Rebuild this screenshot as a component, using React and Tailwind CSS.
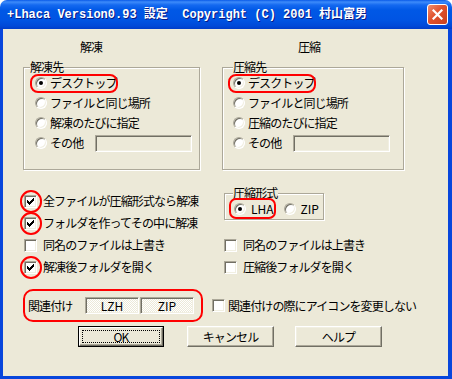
import React from "react";

const sunken =
  "border border-t-[#ACA899] border-l-[#ACA899] border-b-white border-r-white shadow-[inset_1px_1px_0_#716F64,inset_-1px_-1px_0_#F1EFE2]";

const Radio = ({ checked }) => (
  <span className={`relative inline-block w-[12px] h-[12px] shrink-0 rounded-full bg-white ${sunken}`}>
    {checked && <span className="absolute left-[3px] top-[3px] w-[4px] h-[4px] rounded-full bg-black" />}
  </span>
);

const Check = () => (
  <svg width="7" height="7" viewBox="0 0 7 7" shapeRendering="crispEdges" className="absolute left-[2px] top-[2px]">
    <rect x="0" y="2" width="1" height="3" fill="#000" />
    <rect x="1" y="3" width="1" height="3" fill="#000" />
    <rect x="2" y="4" width="1" height="3" fill="#000" />
    <rect x="3" y="3" width="1" height="3" fill="#000" />
    <rect x="4" y="2" width="1" height="3" fill="#000" />
    <rect x="5" y="1" width="1" height="3" fill="#000" />
    <rect x="6" y="0" width="1" height="3" fill="#000" />
  </svg>
);

const Checkbox = ({ checked, marked }) => (
  <span className={`relative inline-block w-[13px] h-[13px] shrink-0 bg-white ${sunken}`}>
    {checked && <Check />}
    {marked && (
      <span className="absolute left-[-5px] top-[-6px] w-[22px] h-[23px] rounded-full border-2 border-[#FF0000]" />
    )}
  </span>
);

const RadioRow = ({ checked, marked, children, extra }) => (
  <div className="relative flex items-center h-[20px]">
    {marked && (
      <span className="absolute left-[-5px] top-[1px] w-[88px] h-[19px] rounded-[8px] border-2 border-[#FF0000]" />
    )}
    <Radio checked={checked} />
    <span className={extra ? "ml-[3px] w-[45px]" : "ml-[3px]"}>{children}</span>
    {extra && <span className={`w-[97px] h-[17px] bg-[#ECE9D8] ${sunken}`} />}
  </div>
);

const CheckRow = ({ checked, marked, children }) => (
  <div className="flex items-center h-[22px]">
    <Checkbox checked={checked} marked={marked} />
    <span className="ml-[6px]">{children}</span>
  </div>
);

const Group = ({ title, legendLeft, width, pad, children }) => (
  <div
    className={`relative h-[103px] border border-[#ACA899] shadow-[1px_1px_0_#fff,inset_1px_1px_0_#fff] pt-[5px] ${width} ${pad}`}
  >
    <span className={`absolute top-[-8px] h-[14px] leading-[14px] bg-[#ECE9D8] pr-[1px] ${legendLeft}`}>{title}</span>
    {children}
  </div>
);

const Button = ({ children, isDefault }) =>
  isDefault ? (
    <div className="w-[86px] h-[21px] border border-black">
      <div className="relative h-full flex items-center justify-center bg-[#ECE9D8] border border-t-white border-l-white border-r-[#716F64] border-b-[#716F64] shadow-[inset_-1px_-1px_0_#ACA899]">
        <span className="absolute inset-[2px] border border-dotted border-black" />
        {children}
      </div>
    </div>
  ) : (
    <div className="w-[87px] h-[21px] flex items-center justify-center bg-[#ECE9D8] border border-t-white border-l-white border-r-[#716F64] border-b-[#716F64] shadow-[inset_-1px_-1px_0_#ACA899,inset_1px_1px_0_#F1EFE2]">
      {children}
    </div>
  );

export default function App() {
  return (
    <div className="w-[452px] h-[379px] bg-white font-['Noto_Sans_CJK_JP',sans-serif] text-[12px] leading-[14px] tracking-[-0.9px] text-black">
      {/* title bar */}
      <div className="h-[29px] flex items-center rounded-t-[7px] bg-[linear-gradient(180deg,#0A5AE8_0px,#3D8BFA_2px,#1469F0_5px,#0058E6_10px,#0054E3_20px,#0049D8_26px,#003CC8_29px)]">
        <span className="pl-[7px] pt-[1px] text-white font-bold text-[12px] tracking-normal whitespace-pre font-['Liberation_Mono','Noto_Sans_CJK_JP',monospace] [text-shadow:1px_1px_0_#0A1883]">
          +Lhaca Version0.93 設定  Copyright (C) 2001 村山富男
        </span>
        <div className="ml-auto mr-[4px] w-[21px] h-[21px] rounded-[3px] border border-white bg-[linear-gradient(135deg,#F08D6D,#E0522E_45%,#C8401E)] flex items-center justify-center">
          <svg width="11" height="11" viewBox="0 0 11 11">
            <path d="M1.5 1.5 L9.5 9.5 M9.5 1.5 L1.5 9.5" stroke="#fff" strokeWidth="2.2" strokeLinecap="square" />
          </svg>
        </div>
      </div>

      {/* body */}
      <div className="h-[350px] bg-[#ECE9D8] border-l-[3px] border-r-[4px] border-b-[3px] border-[#0846DC]">
        <div className="flex pl-[20px] gap-[22px]">
          <div className="flex flex-col">
            <div className="mt-[11px] h-[14px] pl-[57px]">解凍</div>
            <div className="mt-[13px]">
              <Group title="解凍先" legendLeft="left-[6px]" width="w-[177px]" pad="pl-[11px]">
                <RadioRow checked marked>デスクトップ</RadioRow>
                <RadioRow>ファイルと同じ場所</RadioRow>
                <RadioRow>解凍のたびに指定</RadioRow>
                <RadioRow extra>その他</RadioRow>
              </Group>
            </div>
          </div>
          <div className="flex flex-col">
            <div className="mt-[11px] h-[14px] pl-[76px]">圧縮</div>
            <div className="mt-[13px]">
              <Group title="圧縮先" legendLeft="left-[10px]" width="w-[182px]" pad="pl-[10px]">
                <RadioRow checked marked>デスクトップ</RadioRow>
                <RadioRow>ファイルと同じ場所</RadioRow>
                <RadioRow>圧縮のたびに指定</RadioRow>
                <RadioRow extra>その他</RadioRow>
              </Group>
            </div>
          </div>
        </div>

        <div className="flex pl-[21px] mt-[20px]">
          <div className="w-[200px]">
            <CheckRow checked marked>全ファイルが圧縮形式なら解凍</CheckRow>
            <CheckRow checked marked>フォルダを作ってその中に解凍</CheckRow>
            <CheckRow>同名のファイルは上書き</CheckRow>
            <CheckRow checked marked>解凍後フォルダを開く</CheckRow>
          </div>
          <div>
            <div className="mt-[3px] relative w-[100px] h-[27px] border border-[#ACA899] shadow-[1px_1px_0_#fff,inset_1px_1px_0_#fff] flex items-center pl-[9px] pt-[5px]">
              <span className="absolute top-[-8px] left-[8px] h-[14px] leading-[14px] bg-[#ECE9D8] pr-[1px]">圧縮形式</span>
              <div className="relative flex items-center">
                <span className="absolute left-[-5px] top-[-4px] w-[47px] h-[21px] rounded-[7px] border-2 border-[#FF0000]" />
                <Radio checked />
                <span className="ml-[5px] tracking-normal">LHA</span>
              </div>
              <div className="flex items-center ml-[10px]">
                <Radio />
                <span className="ml-[5px] tracking-normal">ZIP</span>
              </div>
            </div>
            <div className="mt-[14px]">
              <CheckRow>同名のファイルは上書き</CheckRow>
              <CheckRow>圧縮後フォルダを開く</CheckRow>
            </div>
          </div>
        </div>

        <div className="flex items-center pl-[20px] mt-[11px]">
          <div className="w-[180px] h-[33px] rounded-[10px] border-2 border-[#FF0000] flex items-center pl-[3px]">
            <span className="w-[57px]">関連付け</span>
            <span className={`w-[54px] h-[17px] flex items-center justify-center tracking-normal bg-[conic-gradient(#fff_25%,#ECE9D8_0_50%,#fff_0_75%,#ECE9D8_0)] bg-[length:2px_2px] ${sunken}`}>
              LZH
            </span>
            <span className={`ml-[1px] w-[54px] h-[17px] flex items-center justify-center tracking-normal bg-[conic-gradient(#fff_25%,#ECE9D8_0_50%,#fff_0_75%,#ECE9D8_0)] bg-[length:2px_2px] ${sunken}`}>
              ZIP
            </span>
          </div>
          <div className="ml-[9px] flex items-center">
            <Checkbox />
            <span className="ml-[3px]">関連付けの際にアイコンを変更しない</span>
          </div>
        </div>

        <div className="flex mt-[4px] pl-[75px]">
          <Button isDefault>OK</Button>
          <div className="ml-[23px]">
            <Button>キャンセル</Button>
          </div>
          <div className="ml-[21px]">
            <Button>ヘルプ</Button>
          </div>
        </div>
      </div>
    </div>
  );
}
